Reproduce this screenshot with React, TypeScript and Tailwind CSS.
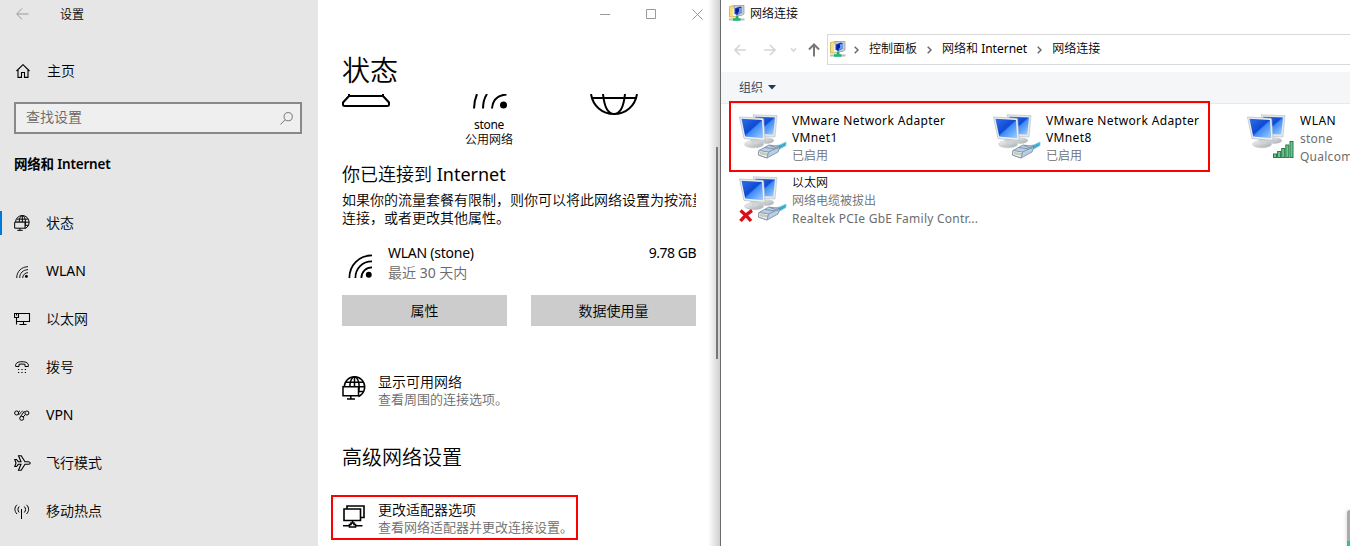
import React from "react";

const line = { fill: "none", stroke: "currentColor", strokeWidth: 1.1 } as const;

function GlobeMonitor({ size = 16, base = "#e6e6e6" }: { size?: number; base?: string }) {
  return (
    <svg width={size} height={size} viewBox="0 0 24 24" fill="none" stroke="currentColor" strokeWidth={size > 20 ? 1.5 : 1.5}>
      <circle cx="12.500" cy="11" r="10.200" />
      <ellipse cx="12.500" cy="11" rx="4.700" ry="10.200" />
      <path d="M12.500 1v10M4 6.200h17M16 15.500h5.500M3 10.800h19.700" />
      <path d="M0 10.800h16.500v13.200H0z" fill={base} stroke="none" />
      <path d="M1 10.800h15.500v9H1zM8.800 20v3M5 23h8" fill={base} />
    </svg>
  );
}

function Wifi({ size = 14, bold = false }: { size?: number; bold?: boolean }) {
  return (
    <svg width={size} height={size} viewBox="0 0 26 26" fill="none" stroke="currentColor" strokeWidth={bold ? 1.9 : 2}>
      <path d="M1.500 26C1.500 12 12 1.500 26 1.500M8 26C8 15.500 15.500 8 26 8M14.500 26C14.500 19.500 19.500 14.500 26 14.500" />
      <circle cx="22.500" cy="22.500" r="3.200" fill="currentColor" stroke="none" />
    </svg>
  );
}

function Ethernet() {
  return (
    <svg width="17" height="14" viewBox="0 0 17 14" {...line}>
      <path d="M4.500 1.500h11v8H2.500M.5 1.500h4v4h-4zM2.500 5.500v7M9.500 9.500v3M5.500 12.500h7M2.500 2v1.500" />
    </svg>
  );
}

function Phone() {
  return (
    <svg width="14" height="13" viewBox="0 0 14 13" {...line} strokeWidth={1}>
      <path d="M.7 5.500C0 2 3 .7 7 .7S14 2 13.300 5.500H10V3.300Q7 2.700 4 3.300V5.500Z" />
      <path d="M3 8.500h1.200M6.400 8.500h1.200M9.800 8.500H11M3 11.500h1.200M6.400 11.500h1.200M9.800 11.500H11" />
    </svg>
  );
}

function Vpn() {
  return (
    <svg width="16" height="11" viewBox="0 0 16 11" {...line} strokeWidth={1}>
      <circle cx="2.600" cy="3" r="2" />
      <circle cx="12.900" cy="3" r="2" />
      <circle cx="7.700" cy="8.300" r="2" />
      <path d="M4.200 4.200C5.500 5.500 7 1.500 8.500 1M4.500 2L6 .8M6.500 6.500L10.500 1M11.400 4.500L9.200 7" />
    </svg>
  );
}

function Plane() {
  return (
    <svg width="17" height="16" viewBox="0 0 17 16" {...line}>
      <path d="M.8 4.500H2.500L4.300 6.700H7L4.500.7H7.200L11 6.700H14.500Q16.200 7 16.200 8Q16.200 9 14.500 9.300H11L7.200 15.300H4.500L7 9.300H4.300L2.500 11.500H.8L2 8Z" />
    </svg>
  );
}

function Hotspot() {
  return (
    <svg width="16" height="15" viewBox="0 0 16 15" {...line} strokeWidth={1}>
      <path d="M3 .8C.2 3.500.2 7 3 10M5.200 2.500C3.500 4.500 3.500 6.500 5.200 8.500M12.500.8C15.300 3.500 15.300 7 12.500 10M10.300 2.500C12 4.500 12 6.500 10.300 8.500M7.500 5v10" />
    </svg>
  );
}

function ControlPanelIcon() {
  return (
    <svg width="16" height="17" viewBox="0 0 16 17">
      <path d="M.5 1.500L5.500.5V12H.5z" fill="#f4df78" stroke="#c8ab42" strokeWidth=".8" />
      <path d="M5 .5h10v8.500l-2.500 1.500H5z" fill="#c8cbd0" stroke="#9a9ea5" strokeWidth=".8" />
      <path d="M4 3.500h3v7.500H4z" fill="#eef2fa" />
      <path d="M5.500 3.500L11 1.500l2 1v5L8 10l-2.500-1.200z" fill="#1838bc" />
      <path d="M9 3.500l4-1v5L9 9z" fill="#6a9bec" />
      <path d="M7 4l3-1v4L7 8.500z" fill="#0b1f9c" />
      <path d="M6.500 11h3v3h-3z" fill="#32a768" />
      <path d="M0 14.500h15.500" stroke="#b9bdbd" strokeWidth="2" />
      <path d="M4 14.500h7.500" stroke="#19b96e" strokeWidth="2.500" />
    </svg>
  );
}

type Badge = "cable" | "wifi" | "unplugged";

function AdapterIcon({ badge }: { badge: Badge }) {
  return (
    <svg width="48" height="48" viewBox="0 0 48 48" className="shrink-0 overflow-visible">
      <defs>
        <linearGradient id={`screen-${badge}`} x1="0" y1="0" x2="1" y2="1">
          <stop offset="0" stopColor="#2f6fe6" />
          <stop offset=".48" stopColor="#0f49d2" />
          <stop offset=".54" stopColor="#3f8bf8" />
          <stop offset="1" stopColor="#a4d2ff" />
        </linearGradient>
        <linearGradient id={`stand-${badge}`} x1="0" y1="0" x2="1" y2="1">
          <stop offset="0" stopColor="#f4f4f4" />
          <stop offset="1" stopColor="#a5abb0" />
        </linearGradient>
      </defs>
      <ellipse cx="27" cy="28.500" rx="8" ry="3.300" fill={`url(#stand-${badge})`} />
      <path d="M14 2.800L38 3.600L36 25L20 24z" fill="#e4e7e9" stroke="#b8bcbf" strokeWidth=".6" />
      <path d="M16 4.800L36 5.500L34.200 22.500L22 22z" fill={`url(#screen-${badge})`} />
      <path d="M11.500 26l8.500 1 .5 4h-9z" fill="#cfd3d6" />
      <ellipse cx="15" cy="32.200" rx="9.500" ry="3.600" fill={`url(#stand-${badge})`} stroke="#c0c4c8" strokeWidth=".5" />
      <path d="M12.300 27h8l-1 4.500q-3 1-6 0z" fill="#d0d4d7" />
      <path d="M.5 5L24.600 6.300L26.200 28.500L5 26.500z" fill="#edf0f1" stroke="#a9aeb2" strokeWidth=".6" />
      <path d="M2.500 6.800L23 7.900L24.200 26.300L6.200 24.600z" fill={`url(#screen-${badge})`} />
      {badge === "wifi" ? (
        <g fill="#6cc58d" stroke="#25794a" strokeWidth="1">
          <rect x="26.500" y="42" width="3" height="3.500" />
          <rect x="30.600" y="39.500" width="3" height="6" />
          <rect x="34.700" y="36.500" width="3" height="9" />
          <rect x="38.800" y="33" width="3" height="12.500" />
          <rect x="43" y="29.500" width="3" height="16" />
        </g>
      ) : (
        <g stroke="#7188a0" strokeWidth=".8">
          <path d="M36 34Q42 33 47 30V33.500L39 38z" fill="#38a9d6" stroke="#8ccbe0" />
          <path d="M20 38.500L30 33L41 34.500L39 40L28 46L19.500 43z" fill="#b9cee2" />
          <path d="M20 38.500L29.500 40L28 46L19.500 43z" fill="#eef3f6" />
          <path d="M29.500 40L41 34.500M26 35.500L36 37M31 33.500L39 36.500" fill="none" />
          <path d="M22 40v2.500M24 40.300v2.700M26 40.600v2.700M28 41v2.500" stroke="#8f8d5c" />
        </g>
      )}
      {badge === "unplugged" && (
        <path d="M1.500 36.500Q6 40 12 47M13 36.500Q6 41 1.500 47" fill="none" stroke="#d90f18" strokeWidth="3.400" />
      )}
    </svg>
  );
}

const nav = [
  { label: "状态", icon: <GlobeMonitor />, active: true },
  { label: "WLAN", icon: <span className="mt-0.5 ml-0.5"><Wifi size={12} /></span> },
  { label: "以太网", icon: <Ethernet /> },
  { label: "拨号", icon: <span className="ml-px"><Phone /></span> },
  { label: "VPN", icon: <Vpn /> },
  { label: "飞行模式", icon: <Plane /> },
  { label: "移动热点", icon: <Hotspot /> },
];

function Sidebar() {
  return (
    <aside className="flex w-[318px] shrink-0 flex-col bg-[#e6e6e6]">
      <div className="flex h-7 items-center pl-4">
        <svg width="13" height="12" viewBox="0 0 13 12" fill="none" stroke="#999"><path d="M6 .5L.7 6L6 11.500M1 6h11.500" /></svg>
        <span className="mt-0.5 ml-[31px] text-xs">设置</span>
      </div>
      <div className="mt-[25px] flex h-9 items-center pl-4 text-sm">
        <svg width="14" height="14" viewBox="0 0 14 14" {...line}><path d="M.5 7L7 .7L13.500 7M2 5.500V13.400H5.500V8.500H8.500V13.400H12V5.500" /></svg>
        <span className="ml-[17px]">主页</span>
      </div>
      <div className="mx-[14px] mt-[13px] flex h-8 w-72 items-center justify-between border-2 border-[#888] bg-[#efefef] pr-[7px] pl-2.5 text-sm text-[#666]">
        <span className="-mt-0.5">查找设置</span>
        <svg width="13" height="13" viewBox="0 0 13 13" fill="none" stroke="#777"><circle cx="8.200" cy="4.700" r="4.100" /><path d="M5.200 7.700L.5 12.500" /></svg>
      </div>
      <h1 className="mt-[18px] h-6 pl-[14px] text-[13.500px] leading-6 font-semibold tracking-[-0.2px]">网络和 Internet</h1>
      <nav className="mt-[23px]">
        {nav.map((n) => (
          <div key={n.label} className="flex h-12 items-center text-sm">
            <span className={n.active ? "h-6 w-0.5 bg-[#0078d7]" : "h-6 w-0.5"} />
            <span className="ml-3 flex w-8 items-center">{n.icon}</span>
            <span className={/^[A-Z]/.test(n.label) ? "font-normal" : ""}>{n.label}</span>
          </div>
        ))}
      </nav>
    </aside>
  );
}

function StatusPage() {
  return (
    <main className="relative flex w-[402px] shrink-0 flex-col overflow-hidden bg-white pl-6">
      <div className="flex h-7 items-center justify-end pr-[17px]">
        <svg width="103" height="11" viewBox="0 0 103 11" fill="none" stroke="#999">
          <path d="M0 5.500h10M92.500.5l10 10M102.500.5l-10 10" /><path d="M46.500.5h9v9h-9z" />
        </svg>
      </div>
      <h1 className="mt-[19px] h-[47px] text-[28px] leading-[46px]">状态</h1>
      <div className="flex h-[23px] items-start">
        <svg width="50" height="14" viewBox="0 0 50 14" fill="none" stroke="#000" strokeWidth="2"><path d="M7 0V2L1 8.500V10.500Q1 12 3 12H45Q47 12 47 10.500V8.500L41 2V0M7 2H41" /></svg>
        <svg className="ml-20" width="36" height="16" viewBox="0 0 36 16" fill="none" stroke="#000" strokeWidth="2"><path d="M5 0Q2 7 2 14.500M15 0Q11 6 11 14.500M20 14.500Q21 1.500 34.500.5" /><circle cx="31.500" cy="11" r="3.500" fill="#000" stroke="none" /></svg>
        <svg className="ml-[82px]" width="48" height="22" viewBox="0 0 48 22" fill="none" stroke="#000" strokeWidth="2"><path d="M1 0C3 12 12 20 24 20S45 12 47 0M13 0Q15 20 24 20Q33 20 35 0M2 4H46" /></svg>
      </div>
      <div className="w-[294px] text-center text-xs leading-[15px]"><p className="font-normal tracking-[-0.3px]">stone</p><p>公用网络</p></div>
      <h2 className="mt-[14px] h-[30px] text-[18px] leading-[26px]">你已连接到 <span className="font-normal">Internet</span></h2>
      <p className="w-[354px] overflow-hidden text-sm leading-[18px] whitespace-nowrap">如果你的流量套餐有限制，则你可以将此网络设置为按流量<br />连接，或者更改其他属性。</p>
      <div className="mt-4 flex h-10 w-[354px] text-sm leading-5">
        <span className="mt-[11px] ml-1.5 w-10"><Wifi size={24} bold /></span>
        <div className="flex-1"><p className="font-normal tracking-[-0.25px]">WLAN (stone)</p><p className="text-[#6b6b6b]">最近 <span className="font-normal">30</span> 天内</p></div>
        <span className="font-normal tracking-[-0.5px]">9.78 GB</span>
      </div>
      <div className="mt-3 flex gap-6 text-sm">
        <button className="h-[31px] w-[165px] bg-[#ccc]">属性</button>
        <button className="h-[31px] w-[165px] bg-[#ccc]">数据使用量</button>
      </div>
      <div className="mt-[47px] flex h-9">
        <span className="mt-[3px] w-9"><GlobeMonitor size={24} base="#ffffff" /></span>
        <div className="leading-[18px]"><p className="text-sm leading-[18px]">显示可用网络</p><p className="-mt-px text-[13px] text-[#6b6b6b]">查看周围的连接选项。</p></div>
      </div>
      <h2 className="mt-[34px] h-[30px] text-xl leading-[30px]">高级网络设置</h2>
      <div className="mt-[22px] -ml-[11px] flex h-[45px] w-[247px] border-2 border-[#f00] pt-1 pl-[9px]">
        <span className="mt-1 w-9">
          <svg width="24" height="24" viewBox="0 0 24 24" fill="none" stroke="#000" strokeWidth="1.600"><path d="M5 4V1H22V12.500H19M2 4h16.500v11.500H2zM10.500 15.500v3M7.500 22v-2.500h1.500v-1.500h3v1.500h1.500V22zM1 20.800h6M14 20.800h6.500" /></svg>
        </span>
        <div className="leading-[18px]"><p className="text-sm leading-[18px]">更改适配器选项</p><p className="-mt-px text-[13px] text-[#6b6b6b]">查看网络适配器并更改连接设置。</p></div>
      </div>
      <div className="absolute inset-y-0 right-0 w-3 bg-linear-to-r from-white to-[#d0d0d0]" />
      <div className="absolute top-[147px] right-[2px] h-[212px] w-0.5 bg-[#777]" />
    </main>
  );
}

function Chevron() {
  return <svg width="5" height="8" viewBox="0 0 5 8" fill="none" stroke="#666" strokeWidth="1.400"><path d="M.7.7L4 4L.7 7.300" /></svg>;
}

function Adapter({ badge, title, lines, selected = false }: { badge: Badge; title: React.ReactNode; lines: string[]; selected?: boolean }) {
  return (
    <div className="flex h-[62px] w-[254px] shrink-0">
      <AdapterIcon badge={badge} />
      <div className="ml-[5px] text-xs leading-[18px] whitespace-nowrap text-[#6d6d6d]">
        <p className={selected ? "mb-px leading-[17px] font-normal tracking-[0.36px] text-black" : badge === "wifi" ? "font-normal tracking-[0.5px] text-black" : "text-black"}>{title}</p>
        {lines.map((l) => <p key={l} className={/^[A-Za-z]/.test(l) ? "font-normal tracking-[0.25px]" : ""}>{l}</p>)}
      </div>
    </div>
  );
}

function ExplorerWindow() {
  return (
    <section className="relative flex min-w-0 flex-1 flex-col overflow-hidden border-l border-[#6b6b6b] bg-white text-xs">
      <div className="flex h-[27px] items-center gap-[5px] pl-2"><ControlPanelIcon /><span>网络连接</span></div>
      <div className="flex h-[45px] items-center">
        <svg className="ml-[13px]" width="86" height="14" viewBox="0 0 86 14" fill="none" stroke="#d5d5d5" strokeWidth="1.600">
          <path d="M6 2L1 7l5 5M1 7h11M36 2l5 5-5 5M30 7h11" /><path d="M57 5.500l2.500 2.500L62 5.500" />
          <path d="M75 6.500L80 1.500l5 5M80 2v11.500" stroke="#777" strokeWidth="2" />
        </svg>
        <div className="ml-[7px] flex h-[31px] flex-1 items-center border border-r-0 border-[#d9d9d9] pl-0.5">
          <ControlPanelIcon />
          <span className="ml-2 w-[15px]"><Chevron /></span><span className="-mt-0.5">控制面板</span>
          <span className="ml-2.5 w-[15px]"><Chevron /></span><span className="-mt-0.5">网络和 <span className="font-normal">Internet</span></span>
          <span className="ml-2.5 w-[15px]"><Chevron /></span><span className="-mt-0.5">网络连接</span>
        </div>
      </div>
      <div className="flex h-8 shrink-0 items-center gap-[5px] border-b border-[#e6e9ed] bg-[#f4f6f8] pl-[18px] text-[#1e395b]">
        组织 <svg width="8" height="5" viewBox="0 0 8 5"><path d="M0 0h8L4 4.500z" fill="#1e395b" /></svg>
      </div>
      <div className="mt-2 ml-[18px] flex">
        <Adapter selected badge="cable" title={<>VMware Network Adapter<br />VMnet1</>} lines={["已启用"]} />
        <Adapter selected badge="cable" title={<>VMware Network Adapter<br />VMnet8</>} lines={["已启用"]} />
        <Adapter badge="wifi" title="WLAN" lines={["stone", "Qualcomm Atheros"]} />
      </div>
      <div className="ml-[18px]"><Adapter badge="unplugged" title="以太网" lines={["网络电缆被拔出", "Realtek PCIe GbE Family Contr..."]} /></div>
      <div className="absolute top-[101px] left-2 h-[71px] w-[481px] border-2 border-[#f00]" />
      <div className="absolute right-0 bottom-0 h-9 w-[3px] overflow-hidden rounded-tl bg-[#aaa] shadow-[0_0_4px_#ccc]"><div className="mt-[31px] h-[5px] bg-[#24ce68]" /></div>
    </section>
  );
}

export default function App() {
  return (
    <div className="flex h-[546px] w-[1350px] overflow-hidden bg-white font-['Noto_Sans','Noto_Sans_CJK_SC',sans-serif] font-[350] text-black">
      <Sidebar />
      <StatusPage />
      <ExplorerWindow />
    </div>
  );
}
